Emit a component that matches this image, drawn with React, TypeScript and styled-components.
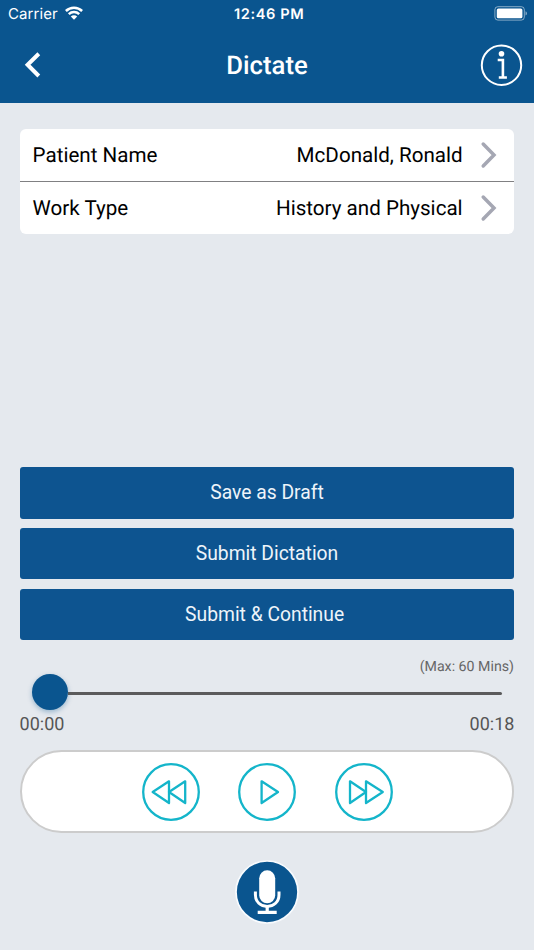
import React from "react";
import styled, { createGlobalStyle } from "styled-components";

const GlobalStyle = createGlobalStyle`
  * { box-sizing: border-box; }
  body { margin: 0; background: #e5e9ee; }
`;

const blue = "#0a558f";
const teal = "#14b5ca";

const Screen = styled.div`
  width: 534px;
  height: 950px;
  overflow: hidden;
  display: flex;
  flex-direction: column;
  background: #e5e9ee;
  font-family: Roboto, sans-serif;
  color: #000;
  text-rendering: geometricPrecision;
`;

const Header = styled.header`
  height: 103.4px;
  flex: none;
  background: ${blue};
  color: #fff;
`;

const StatusBar = styled.div`
  height: 28px;
  padding: 0 6.5px 0 8px;
  display: grid;
  grid-template-columns: 1fr auto 1fr;
  align-items: center;
  font-family: Inter, sans-serif;
  font-size: 15px;
  line-height: 28px;
`;

const Carrier = styled.div`
  display: flex;
  align-items: center;
  gap: 7px;
  letter-spacing: 0.1px;
  svg { display: block; margin-top: -2px; }
`;

const Clock = styled.div`
  font-weight: 600;
  font-size: 14.6px;
  letter-spacing: 0.6px;
  padding-left: 3px;
`;

const Battery = styled.div`
  display: flex;
  justify-content: flex-end;
  svg { display: block; margin-top: -1px; }
`;

const NavBar = styled.div`
  height: 74px;
  padding: 0 11px;
  display: grid;
  grid-template-columns: 1fr auto 1fr;
  align-items: center;
`;

const Title = styled.h1`
  margin: 0;
  padding-top: 2px;
  font-size: 25.7px;
  line-height: 30px;
  font-weight: 500;
`;

const IconButton = styled.button<{ $end?: boolean }>`
  border: 0;
  padding: 0;
  background: none;
  justify-self: ${(p) => (p.$end ? "end" : "start")};
  svg { display: block; }
`;

const BackButton = styled(IconButton)`
  margin-left: 13px;
`;

const Card = styled.section`
  margin: 25.6px 19.6px 0;
  height: 105px;
  flex: none;
  border-radius: 6px;
  background: #fff;
  overflow: hidden;
`;

const Row = styled.div`
  height: 53px;
  padding: 0 16.4px 0 13px;
  display: flex;
  align-items: center;
  font-size: 20.6px;
  line-height: 50px;
  & + & { height: 52px; }
  &:first-child { border-bottom: 1.2px solid #808082; }
  span { padding-top: 2px; }
  svg { display: block; margin-left: 17.4px; }
`;

const RowLabel = styled.span`
  flex: 1;
`;

const Actions = styled.div`
  margin: 233.3px 19.6px 0;
  display: flex;
  flex-direction: column;
  gap: 9.3px;
`;

const ActionButton = styled.button<{ $shift?: boolean }>`
  height: 51.4px;
  border: 0;
  border-radius: 3px;
  padding: 1px ${(p) => (p.$shift ? "4.8px" : "0")} 0 0;
  background: #0d5490;
  color: #eef4fa;
  font: 400 19.3px/50px Roboto, sans-serif;
`;

const MaxNote = styled.div`
  margin: 19px 20px 0;
  text-align: right;
  color: #666;
  font-size: 14.2px;
  line-height: 17px;
`;

const Slider = styled.div`
  height: 36px;
  margin: -2px 32px 0 31.5px;
  display: flex;
  align-items: center;
`;

const Knob = styled.div`
  width: 36px;
  height: 36px;
  flex: none;
  border-radius: 50%;
  background: ${blue};
  box-shadow: 0 2px 5px rgba(10, 85, 143, 0.35);
`;

const Track = styled.div`
  flex: 1;
  height: 3px;
  margin-top: 2px;
  border-radius: 0 2px 2px 0;
  background: #5b5b5c;
`;

const Times = styled.div`
  margin: 4px 19.6px 0;
  display: flex;
  justify-content: space-between;
  color: #555;
  font-size: 18px;
  line-height: 22px;
`;

const Player = styled.div`
  height: 83px;
  margin: 14px 20px 0;
  flex: none;
  border: 2px solid #ccc;
  border-radius: 44px;
  background: #fff;
  display: flex;
  align-items: center;
  justify-content: center;
  gap: 38.5px;
  padding-left: 0.4px;
`;

const RecordRow = styled.div`
  margin-top: 26.5px;
  display: flex;
  justify-content: center;
`;

const Chevron = () => (
  <svg width="18" height="28" viewBox="0 0 18 28" fill="none">
    <path d="M3.2 3 14 14 3.2 25" stroke="#a5a7b3" strokeWidth="3.5" strokeLinecap="round" strokeLinejoin="miter" />
  </svg>
);

const icons: Record<string, string[]> = {
  Rewind: ["M27 18.3 10.7 29 27 40Z", "M43.2 18.3 27 29 43.2 40Z"],
  Play: ["M23.6 18.3 40 29 23.6 40Z"],
  Forward: ["M15 18.3 31 29 15 40Z", "M31 18.3 47.8 29 31 40Z"],
};

const PlayerButton = ({ name }: { name: string }) => (
  <IconButton aria-label={name}>
    <svg width="58" height="58" viewBox="0 0 58 58" fill="none" stroke={teal} strokeWidth="2.3" strokeLinejoin="round">
      <circle cx="29" cy="29" r="27.8" />
      {icons[name].map((d) => (
        <path key={d} d={d} />
      ))}
    </svg>
  </IconButton>
);

const rows = [
  ["Patient Name", "McDonald, Ronald"],
  ["Work Type", "History and Physical"],
];

export default function App() {
  return (
    <Screen>
      <GlobalStyle />
      <Header>
        <StatusBar>
          <Carrier>
            Carrier
            <svg width="18" height="14" viewBox="0 0 18 14" fill="none" stroke="#fff" strokeWidth="2.5">
              <path d="M.9 5a11.6 11.6 0 0 1 16.2 0" />
              <path d="M3.8 8.2a7.5 7.5 0 0 1 10.4 0" />
              <path d="M9 13.8 5.8 10.6a4.4 4.4 0 0 1 6.4 0Z" fill="#fff" stroke="none" />
            </svg>
          </Carrier>
          <Clock>12:46 PM</Clock>
          <Battery>
            <svg width="34" height="15" viewBox="0 0 34 15">
              <rect x=".9" y=".7" width="29.4" height="13.4" rx="3" fill="none" stroke="#fff" strokeOpacity=".5" />
              <rect x="2.8" y="2.5" width="25.6" height="9.8" rx="1.6" fill="#fff" />
              <path d="M31.5 5.2q1.5.6 1.5 2.2t-1.5 2.2Z" fill="#fff" opacity=".5" />
            </svg>
          </Battery>
        </StatusBar>
        <NavBar>
          <BackButton aria-label="Back">
            <svg width="18" height="28" viewBox="0 0 18 28" fill="none">
              <path d="M14.8 2.7 3.6 13.7l11.2 11.3" stroke="#fff" strokeWidth="4" />
            </svg>
          </BackButton>
          <Title>Dictate</Title>
          <IconButton $end aria-label="Information">
            <svg width="43" height="43" viewBox="0 0 43 43" fill="none">
              <circle cx="21.5" cy="21.2" r="19.7" stroke="#fff" strokeWidth="2" />
              <circle cx="21.5" cy="9.7" r="2.8" fill="#fff" />
              <path d="M17.7 16H22.9V33.5M18.8 33.5H26.9" stroke="#fff" strokeWidth="2.6" />
            </svg>
          </IconButton>
        </NavBar>
      </Header>
      <Card>
        {rows.map(([label, value]) => (
          <Row key={label}>
            <RowLabel>{label}</RowLabel>
            <span>{value}</span>
            <Chevron />
          </Row>
        ))}
      </Card>
      <Actions>
        <ActionButton>Save as Draft</ActionButton>
        <ActionButton>Submit Dictation</ActionButton>
        <ActionButton $shift>Submit &amp; Continue</ActionButton>
      </Actions>
      <MaxNote>(Max: 60 Mins)</MaxNote>
      <Slider>
        <Knob />
        <Track />
      </Slider>
      <Times>
        <span>00:00</span>
        <span>00:18</span>
      </Times>
      <Player>
        <PlayerButton name="Rewind" />
        <PlayerButton name="Play" />
        <PlayerButton name="Forward" />
      </Player>
      <RecordRow>
        <IconButton aria-label="Record">
          <svg width="64" height="64" viewBox="0 0 64 64" fill="none">
            <circle cx="32" cy="32" r="31" fill={blue} stroke="#f8fbfe" strokeWidth="1.7" />
            <rect x="24.2" y="10.3" width="16" height="33" rx="8" fill="#fff" />
            <path d="M20.4 31.5v3.2c0 7.2 5.2 11.7 11.8 11.7S44 41.9 44 34.7v-3.2" stroke="#fff" strokeWidth="3" />
            <path d="M32.2 46v6M22.7 52.3h19" stroke="#fff" strokeWidth="3.2" />
          </svg>
        </IconButton>
      </RecordRow>
    </Screen>
  );
}
